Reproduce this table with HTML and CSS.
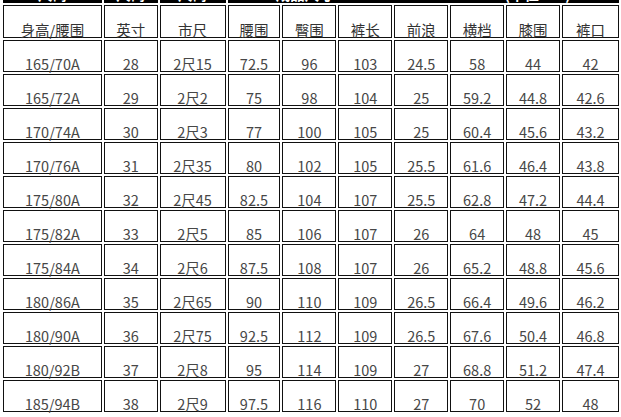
FILE: index.html
```html
<!DOCTYPE html>
<html lang="zh">
<head>
<meta charset="utf-8">
<title>尺码表</title>
<link rel="stylesheet" href="styles.css">
</head>
<body>
<div class="sheet">
<table class="size-table">
  <tr class="band">
    <td>尺码</td>
    <td>尺码</td>
    <td>尺码</td>
    <td colspan="7">成品尺寸 Garment Measurement (单位:cm)</td>
  </tr>
  <tr class="head">
    <td class="w1">身高/腰围</td>
    <td class="w2">英寸</td>
    <td class="w3">市尺</td>
    <td class="w4">腰围</td>
    <td class="w5">臀围</td>
    <td class="w5">裤长</td>
    <td class="w5">前浪</td>
    <td class="w5">横档</td>
    <td class="w5">膝围</td>
    <td class="w6">裤口</td>
  </tr>
  <tr><td>165/70A</td><td>28</td><td>2尺15</td><td>72.5</td><td>96</td><td>103</td><td>24.5</td><td>58</td><td>44</td><td>42</td></tr>
  <tr><td>165/72A</td><td>29</td><td>2尺2</td><td>75</td><td>98</td><td>104</td><td>25</td><td>59.2</td><td>44.8</td><td>42.6</td></tr>
  <tr><td>170/74A</td><td>30</td><td>2尺3</td><td>77</td><td>100</td><td>105</td><td>25</td><td>60.4</td><td>45.6</td><td>43.2</td></tr>
  <tr><td>170/76A</td><td>31</td><td>2尺35</td><td>80</td><td>102</td><td>105</td><td>25.5</td><td>61.6</td><td>46.4</td><td>43.8</td></tr>
  <tr><td>175/80A</td><td>32</td><td>2尺45</td><td>82.5</td><td>104</td><td>107</td><td>25.5</td><td>62.8</td><td>47.2</td><td>44.4</td></tr>
  <tr><td>175/82A</td><td>33</td><td>2尺5</td><td>85</td><td>106</td><td>107</td><td>26</td><td>64</td><td>48</td><td>45</td></tr>
  <tr><td>175/84A</td><td>34</td><td>2尺6</td><td>87.5</td><td>108</td><td>107</td><td>26</td><td>65.2</td><td>48.8</td><td>45.6</td></tr>
  <tr><td>180/86A</td><td>35</td><td>2尺65</td><td>90</td><td>110</td><td>109</td><td>26.5</td><td>66.4</td><td>49.6</td><td>46.2</td></tr>
  <tr><td>180/90A</td><td>36</td><td>2尺75</td><td>92.5</td><td>112</td><td>109</td><td>26.5</td><td>67.6</td><td>50.4</td><td>46.8</td></tr>
  <tr><td>180/92B</td><td>37</td><td>2尺8</td><td>95</td><td>114</td><td>109</td><td>27</td><td>68.8</td><td>51.2</td><td>47.4</td></tr>
  <tr><td>185/94B</td><td>38</td><td>2尺9</td><td>97.5</td><td>116</td><td>110</td><td>27</td><td>70</td><td>52</td><td>48</td></tr>
</table>
</div>
</body>
</html>
```

FILE: styles.css
```css
html, body {
  margin: 0;
  padding: 0;
  background: #fff;
  overflow: hidden;
}

.sheet {
  margin: -23px 0 0 1px;
}

.size-table {
  border-collapse: separate;
  border-spacing: 2px;
  table-layout: auto;
  font-family: "Noto Sans CJK SC", "Noto Sans", sans-serif;
  font-size: 14.5px;
  color: #474747;
}

.size-table td {
  box-sizing: border-box;
  height: 32px;
  border: 1px solid #111;
  padding: 0;
  text-align: center;
  vertical-align: bottom;
  line-height: 14px;
  white-space: nowrap;
}

.size-table .band td {
  height: 24px;
  background: #000;
  border-color: #000;
  color: #fff;
  font-weight: bold;
  line-height: 17px;
  padding: 0;
}

.size-table .head td {
  height: 33px;
  color: #333;
}

.w1 { width: 99px; }
.w2 { width: 54px; }
.w3 { width: 66px; }
.w4 { width: 53px; }
.w5 { width: 54px; }
.w6 { width: 57px; }
```
